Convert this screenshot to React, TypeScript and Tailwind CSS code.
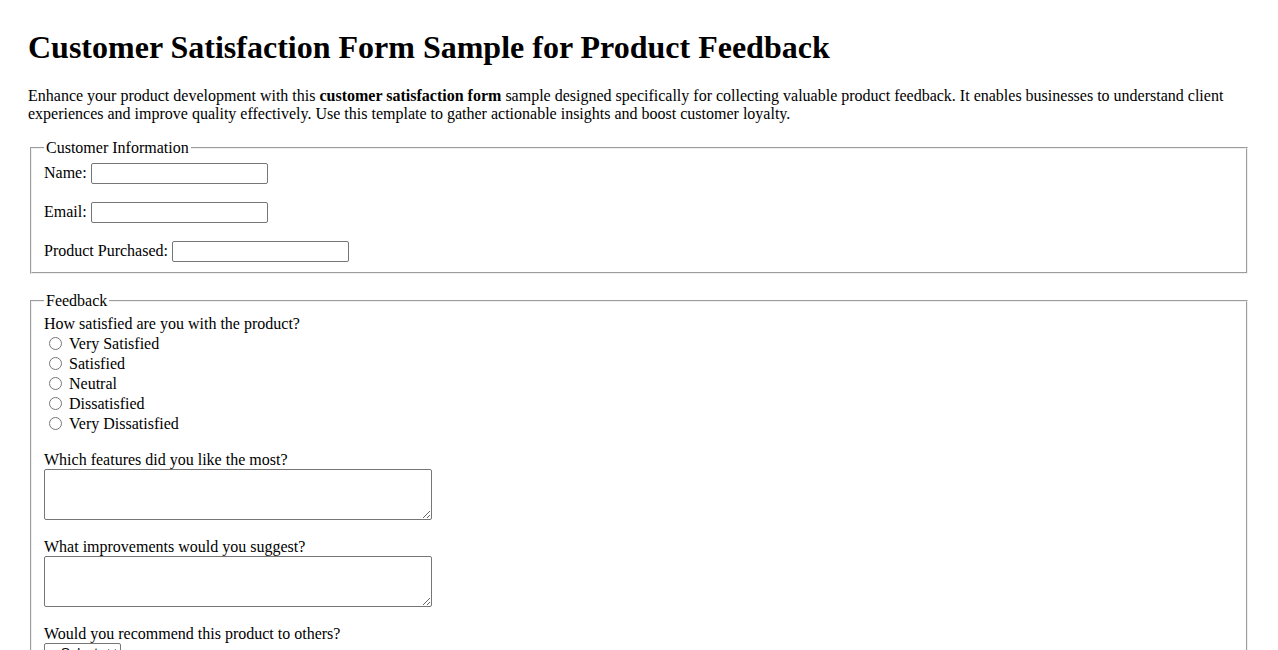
import React from 'react';

const ratings = ['Very Satisfied', 'Satisfied', 'Neutral', 'Dissatisfied', 'Very Dissatisfied'];

function TextField({ label, id }: { label: string; id: string }) {
    return (
        <div className="flex items-center h-[21px] leading-[18px]">
            <label htmlFor={id}>{label}</label>
            <input
                id={id}
                type="text"
                className="ml-[4px] w-[177px] h-[21px] border border-[#767676] rounded-[2px] bg-white px-[2px] text-[13.33px]"
            />
        </div>
    );
}

export default function App() {
    return (
        <div className="min-h-screen bg-white text-black px-[28px] pt-[29px] text-[16px] leading-[18px] font-['Liberation_Serif',_'Times_New_Roman',_serif]">
            <h1 className="text-[32px] font-bold leading-[37px] mb-[21px]">
                Customer Satisfaction Form Sample for Product Feedback
            </h1>
            <p className="mb-[16px]">
                Enhance your product development with this <strong>customer satisfaction form</strong> sample designed specifically for collecting valuable product feedback. It enables businesses to understand client experiences and improve quality effectively. Use this template to gather actionable insights and boost customer loyalty.
            </p>

            <form>
                <fieldset className="mx-[2px] border-2 [border-style:groove] border-[#f0f0f0] px-[12px] pt-[5.6px] pb-[10px]">
                    <legend className="px-[2px] leading-[18px]">Customer Information</legend>
                    <div className="flex flex-col gap-[18px]">
                        <TextField label="Name:" id="name" />
                        <TextField label="Email:" id="email" />
                        <TextField label="Product Purchased:" id="product" />
                    </div>
                </fieldset>

                <fieldset className="mx-[2px] mt-[18px] border-2 [border-style:groove] border-[#f0f0f0] px-[12px] pt-[5.6px] pb-[10px]">
                    <legend className="px-[2px] leading-[18px]">Feedback</legend>
                    <div className="h-[18px]">How satisfied are you with the product?</div>
                    {ratings.map(r => (
                        <label key={r} className="flex items-end h-[20px]">
                            <input
                                type="radio"
                                name="satisfaction"
                                className="w-[13px] h-[13px] ml-[5px] mr-[7px] mb-[3px] accent-[#767676]"
                            />
                            <span className="leading-[18px]">{r}</span>
                        </label>
                    ))}

                    <div className="h-[18px] mt-[18px]">Which features did you like the most?</div>
                    <textarea className="block w-[388px] h-[51px] border border-[#767676] rounded-[2px] p-[2px] font-mono text-[13.33px]" />

                    <div className="h-[18px] mt-[18px]">What improvements would you suggest?</div>
                    <textarea className="block w-[388px] h-[51px] border border-[#767676] rounded-[2px] p-[2px] font-mono text-[13.33px]" />

                    <div className="h-[18px] mt-[18px]">Would you recommend this product to others?</div>
                    <select className="block w-[77px] h-[19px] border border-[#767676] rounded-[2px] bg-white text-[13.33px] font-['Liberation_Sans',_Arial,_sans-serif] pl-[12px]">
                        <option>Select</option>
                        <option>Yes</option>
                        <option>No</option>
                        <option>Maybe</option>
                    </select>
                    <div className="h-[40px]" />
                </fieldset>
            </form>
        </div>
    );
}
